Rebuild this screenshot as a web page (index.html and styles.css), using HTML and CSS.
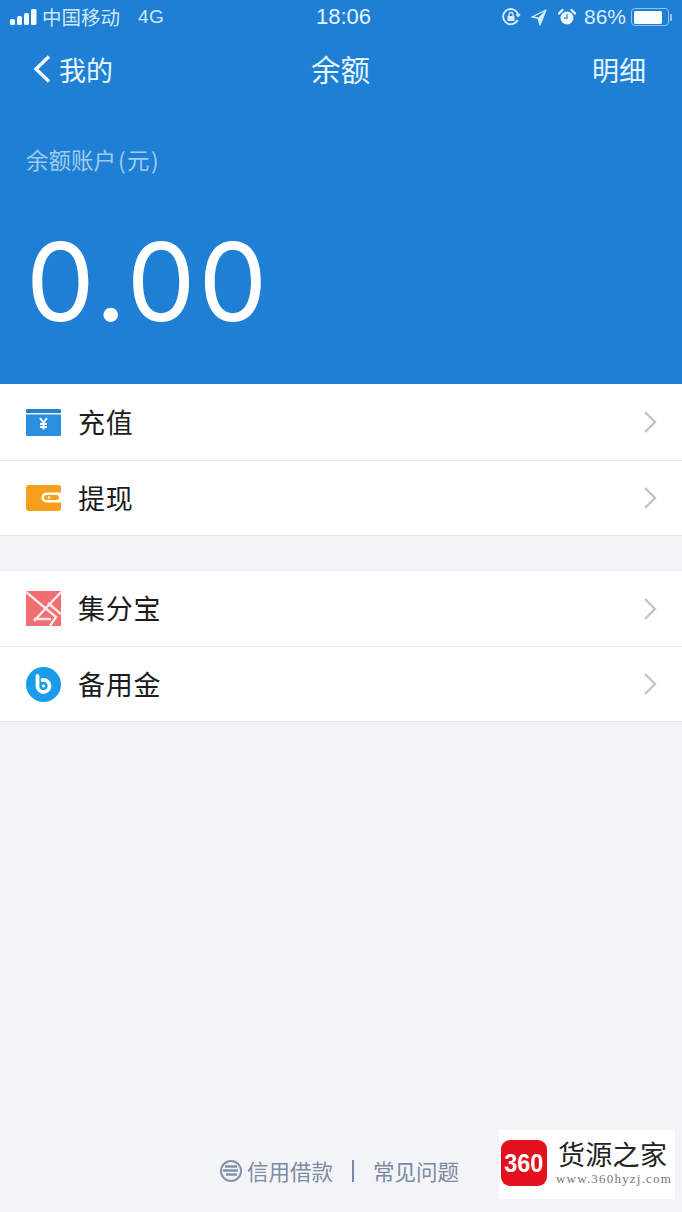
FILE: index.html
```html
<!DOCTYPE html>
<html lang="zh">
<head>
<meta charset="utf-8">
<title>余额</title>
<link rel="stylesheet" href="styles.css">
</head>
<body>
<div class="screen">
  <header class="hero">
    <div class="status">
      <div class="status-left">
        <svg class="signal" width="27" height="17" viewBox="0 0 27 17"><rect x="0" y="10" width="5" height="6" rx="1.500"/><rect x="7" y="7" width="5" height="9" rx="1.500"/><rect x="14" y="4" width="5" height="12" rx="1.500"/><rect x="21" y="0" width="5.500" height="16" rx="1.500"/></svg>
        <span class="carrier">中国移动</span>
        <span class="net">4G</span>
      </div>
      <span class="time">18:06</span>
      <div class="status-right">
        <svg width="20" height="20" viewBox="0 0 20 20" fill="none" stroke="#d8eefb"><path d="M16.600 13A7.600 7.600 0 1 1 17.200 8" stroke-width="1.800"/><path d="M15 7.500l2.300 2 1.700-2.500" stroke-width="1.400"/><rect x="6.500" y="9" width="7" height="5" fill="#d8eefb" stroke="none"/><path d="M8 9V7.500a2 2 0 0 1 4 0V9" stroke-width="1.300"/></svg>
        <svg class="arrow" width="16" height="18" viewBox="0 0 16 18"><path d="M15 2L1 9l6 1 2 7z" fill="none" stroke="#d8eefb" stroke-width="1.300" stroke-linejoin="round"/><path d="M15 2L7 10l2 7z" fill="#d8eefb"/></svg>
        <svg class="alarm" width="18" height="18" viewBox="0 0 18 18"><circle cx="9" cy="10" r="6.500" fill="#eef8fd"/><path d="M9 6v4.200H5.800" fill="none" stroke="#1f7fd4" stroke-width="1.200"/><path d="M1 5.500L4.500 2M17 5.500L13.500 2" stroke="#eef8fd" stroke-width="2.400" stroke-linecap="round"/></svg>
        <span class="pct">86%</span>
        <div class="battery"><div class="battery-fill"></div></div>
        <div class="battery-tip"></div>
      </div>
    </div>
    <nav class="nav">
      <div class="nav-back">
        <svg width="20" height="30" viewBox="0 0 20 30"><path d="M17 2.500L4 15l13 12.500" fill="none" stroke="#f2fbff" stroke-width="3.400"/></svg>
        <span>我的</span>
      </div>
      <span class="nav-title">余额</span>
      <span class="nav-action">明细</span>
    </nav>
    <div class="label">余额账户<span class="label-unit">(元)</span></div>
    <div class="amount">0.00</div>
  </header>

  <section class="group group-first">
    <div class="row">
      <svg class="icon" width="35" height="27" viewBox="0 0 35 27"><rect width="35" height="27" rx="1.500" fill="#2b8fe0"/><rect width="35" height="4" rx="1.500" fill="#2a80c4"/><rect y="4" width="35" height="1.500" fill="#e6f3fc"/><path d="M14 9l3.500 4.500L21 9M17.500 13.500v7M14 15h7M14 18h7" fill="none" stroke="#fff" stroke-width="2"/></svg>
      <span class="row-text">充值</span>
      <svg class="chev" width="14" height="24" viewBox="0 0 14 24"><path d="M2 2l10 10L2 22" fill="none" stroke="#c4c4c6" stroke-width="2.400"/></svg>
    </div>
    <div class="row">
      <svg class="icon" width="35" height="26" viewBox="0 0 35 26"><rect width="35" height="26" rx="3" fill="#f69f1c"/><path d="M35 7.500H20.500a5 5 0 0 0 0 10H35z" fill="#fff"/><rect x="18" y="10" width="15" height="5" rx="2.500" fill="#f69f1c"/><circle cx="23" cy="12.500" r="1.400" fill="#fde3b8"/></svg>
      <span class="row-text">提现</span>
      <svg class="chev" width="14" height="24" viewBox="0 0 14 24"><path d="M2 2l10 10L2 22" fill="none" stroke="#c4c4c6" stroke-width="2.400"/></svg>
    </div>
  </section>

  <section class="group group-second">
    <div class="row">
      <svg class="icon" width="35" height="35" viewBox="0 0 35 35"><rect width="35" height="35" fill="#f06d72"/><path d="M0 1l30 25-6 9M35 1L8 30M8 28h17M22 12l13 11" fill="none" stroke="#fbeaea" stroke-width="2.400"/></svg>
      <span class="row-text">集分宝</span>
      <svg class="chev" width="14" height="24" viewBox="0 0 14 24"><path d="M2 2l10 10L2 22" fill="none" stroke="#c4c4c6" stroke-width="2.400"/></svg>
    </div>
    <div class="row">
      <svg class="icon" width="35" height="35" viewBox="0 0 35 35"><circle cx="17.500" cy="17.500" r="17.500" fill="#1b9ceb"/><path d="M11.500 9v10a6 6 0 1 0 6-6h-1" fill="none" stroke="#fff" stroke-width="3.800" stroke-linecap="round"/><circle cx="17.500" cy="19" r="1.500" fill="#fff"/></svg>
      <span class="row-text">备用金</span>
      <svg class="chev" width="14" height="24" viewBox="0 0 14 24"><path d="M2 2l10 10L2 22" fill="none" stroke="#c4c4c6" stroke-width="2.400"/></svg>
    </div>
  </section>

  <footer class="footer">
    <svg width="24" height="24" viewBox="0 0 24 24" fill="none" stroke="#8391ad"><circle cx="12" cy="12" r="10" stroke-width="2"/><path d="M6 7.500h12M4 11.500h15M7 15.500h11" stroke-width="2.400"/></svg>
    <span class="foot-link foot-first">信用借款</span>
    <span class="foot-sep"></span>
    <span class="foot-link">常见问题</span>
  </footer>

  <aside class="mark">
    <div class="mark-logo"><span class="mark-digits">360</span></div>
    <div class="mark-text">
      <div class="mark-name">货源之家</div>
      <div class="mark-url">www.360hyzj.com</div>
    </div>
  </aside>
</div>
</body>
</html>
```
FILE: styles.css
```css
* { box-sizing: border-box; }
html, body { margin: 0; padding: 0; }
body {
  width: 682px;
  height: 1212px;
  overflow: hidden;
  font-family: "Noto Sans CJK SC", "Liberation Sans", sans-serif;
}
.screen {
  position: relative;
  width: 682px;
  height: 1212px;
  background: #f3f4f8;
  display: flex;
  flex-direction: column;
}
.hero {
  height: 384px;
  background: #1f7fd4;
  color: #fff;
  padding: 0;
}
.status {
  height: 36px;
  display: flex;
  align-items: center;
  justify-content: space-between;
  padding: 0 10px 2px 10px;
  color: #cfe8f8;
  position: relative;
}
.status-left { display: flex; align-items: center; width: 200px; }
.signal { fill: #f4fbff; margin-right: 5px; }
.carrier { font-size: 19.500px; line-height: 24px; color: #cfe8f8; }
.net { font-family: "Liberation Sans", sans-serif; font-size: 19px; margin-left: 18px; color: #cfe8f8; letter-spacing: 0.500px; }
.time { font-family: "Liberation Sans", sans-serif; font-size: 22px; color: #e4f3fc; position: absolute; left: 316px; top: 4px; line-height: 26px; }
.status-right { display: flex; align-items: center; }
.arrow { margin-left: 10px; }
.alarm { margin-left: 11px; }
.pct { font-family: "Liberation Sans", sans-serif; font-size: 21px; margin-left: 8px; color: #d8eefb; }
.battery {
  width: 38px;
  height: 18px;
  margin-left: 5px;
  border: 1.500px solid #8fc3ea;
  border-radius: 4px;
  padding: 1.500px;
}
.battery-fill { width: 86%; height: 100%; background: #f8fdff; border-radius: 1.500px; }
.battery-tip { width: 2px; height: 7px; margin-left: 1px; background: #8fc3ea; }
.nav {
  height: 66px;
  position: relative;
  display: flex;
  align-items: center;
  justify-content: space-between;
  padding: 0 36px 0 32px;
  font-size: 27px;
  color: #e6f6fd;
}
.nav-back { display: flex; align-items: center; gap: 7px; }
.nav-title { position: absolute; left: 311px; top: 12px; line-height: 40px; font-size: 29.500px; }
.label { font-size: 22.500px; line-height: 30px; color: #9fcbec; padding: 42px 0 0 26px; height: 119px; }
.label-unit { letter-spacing: 1.500px; margin-left: 2px; }
.amount {
  font-family: Inter, "Liberation Sans", sans-serif;
  font-weight: 400;
  font-size: 109px;
  line-height: 120px;
  letter-spacing: 3px;
  padding: 0 0 0 26px;
  color: #fff;
}
.group { background: #fff; }
.group-second { margin-top: 35px; }
.row {
  height: 75px;
  display: flex;
  align-items: center;
  padding: 0 25px 0 26px;
  border-bottom: 1px solid #e8e8ec;
}
.group-first .row:first-child { height: 77px; }
.group-second .row:first-child { height: 76px; }
.icon { flex: none; }
.row-text { flex: 1; margin: 0 0 2px 17px; font-size: 27px; color: #1c1c1e; letter-spacing: 0.700px; }
.chev { flex: none; }
.footer {
  position: absolute;
  left: 219px;
  top: 1154px;
  height: 34px;
  display: flex;
  align-items: center;
  color: #7d8aa3;
  font-size: 21.500px;
}
.foot-link { margin-bottom: 2px; }
.foot-first { margin-left: 4px; }
.foot-sep { width: 2px; height: 22px; background: #7688a8; margin: 0 19px; }
.mark {
  position: absolute;
  left: 499px;
  top: 1130px;
  width: 176px;
  height: 69px;
  background: #fff;
  display: flex;
  align-items: center;
  padding: 0 0 4px 2px;
}
.mark-logo {
  width: 46px;
  height: 46px;
  background: #e3101e;
  border-radius: 9px;
  color: #fff;
  font-family: "Liberation Sans", sans-serif;
  font-weight: 700;
  font-size: 26px;
  line-height: 46px;
  text-align: center;
}
.mark-digits { display: inline-block; transform: scaleX(0.9); }
.mark-text { margin-left: 11px; }
.mark-name { font-family: "Noto Sans CJK SC", serif; font-size: 27px; line-height: 32px; color: #222; letter-spacing: 0.300px; }
.mark-url { font-family: "Liberation Serif", serif; font-size: 13px; line-height: 16px; color: #777; letter-spacing: 1.200px; margin: 1px 0 0 -2px; white-space: nowrap; }
```
